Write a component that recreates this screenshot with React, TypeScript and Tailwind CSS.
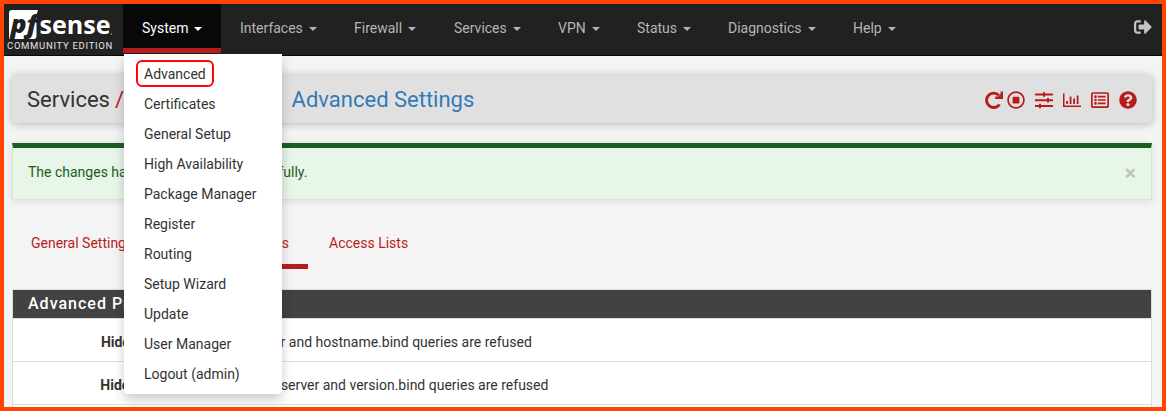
import { FaSignOutAlt, FaRegStopCircle, FaRegListAlt, FaQuestionCircle } from "react-icons/fa";

const menus = [
  { label: "Interfaces", width: "w-[114px]" },
  { label: "Firewall", width: "w-[100px]" },
  { label: "Services", width: "w-[104px]" },
  { label: "VPN", width: "w-[79px]" },
  { label: "Status", width: "w-[91px]" },
  { label: "Diagnostics", width: "w-[125px]" },
  { label: "Help", width: "w-[81px]" },
];

const systemItems = [
  "Advanced", "Certificates", "General Setup", "High Availability", "Package Manager",
  "Register", "Routing", "Setup Wizard", "Update", "User Manager", "Logout (admin)",
];

function Caret() {
  return <span className="ml-[6px] mt-px h-0 w-0 border-x-4 border-t-4 border-x-transparent border-t-current" />;
}

function Logo() {
  return (
    <div className="w-[119px] pl-[3px] pt-[6px] text-white">
      <svg width="110" height="30" viewBox="0 0 110 30" className="block overflow-visible">
        <path d="M5 0H31Q29.500 3 29.500 7V26Q29.500 29 26.500 29H2V3Q2 0 5 0Z" fill="#fff" />
        <text x="3.500" y="23" fontFamily="Open Sans" fontWeight="800" fontStyle="italic" fontSize="25" textLength="27" lengthAdjust="spacingAndGlyphs" fill="#212121">pf</text>
        <text x="32.500" y="24" fontFamily="Open Sans" fontWeight="700" fontSize="25" textLength="71" lengthAdjust="spacingAndGlyphs" fill="#fff">sense</text>
        <circle cx="104.500" cy="24" r="0.8" fill="#aaa" />
      </svg>
      <div className="whitespace-nowrap text-[9.5px] leading-[12px] tracking-[0.7px] text-[#e6e6e6]">COMMUNITY EDITION</div>
    </div>
  );
}

function RestartIcon() {
  return (
    <svg viewBox="0 0 18 18" width="18" height="18" className="-mr-[6px]">
      <path d="M13.800 4.200A7.200 7.200 0 1 0 14.600 13.500" fill="none" stroke="currentColor" strokeWidth="2.900" />
      <path d="M18 0.500V8H10.200V5.600H13L15.600 3V0.500Z" fill="currentColor" />
    </svg>
  );
}

function SlidersIcon() {
  return (
    <svg viewBox="0 0 18 18" width="18" height="18" fill="currentColor">
      <path d="M0 2.500h18v2H0zM0 8.200h18v2H0zM0 14h18v2H0z" />
      <path d="M8 1.200h2v4.600H8zM12 6.900h2v4.600h-2zM4 12.700h2v4.600H4z" />
    </svg>
  );
}

function ChartIcon() {
  return (
    <svg viewBox="0 0 18 18" width="18" height="18" fill="currentColor">
      <path d="M0 2.500h1.500v12H18V16H0zM3.200 10h1.800v3H3.200zM6.700 5.500h1.800V13H6.700zM10.200 7.500H12V13h-1.800zM13.700 4.500h1.800V13h-1.800z" />
    </svg>
  );
}

function OptionRow({ label, text }: { label: string; text: string }) {
  return (
    <div className="flex h-[43px] items-center border-b border-[#ddd] pt-1">
      <div className="w-[168px] shrink-0 text-right font-bold">{label}</div>
      <div className="ml-[34px] flex items-center whitespace-nowrap">
        <span className="mr-1 h-[13px] w-[13px] shrink-0 rounded-sm border border-[#767676] bg-white" />
        {text}
      </div>
    </div>
  );
}

export default function App() {
  return (
    <div className="relative h-[411px] w-[1166px] overflow-hidden border-4 border-[#ff4500] bg-[#f4f4f4] text-[14px] leading-[20px] text-[#333] [font-family:Roboto,sans-serif]">
      <header className="flex h-[52px] border-b border-[#080808] bg-[#212121] text-[#b5b5b5]">
        <Logo />
        <div className="relative w-[98px]">
          <div className="flex h-[49px] items-center border-b-[5px] border-[#b71c1c] bg-[#080808] pl-[19px] pt-1 text-white">
            System<Caret />
          </div>
          <ul className="absolute left-px top-[50px] z-10 w-[158px] rounded-b bg-white py-[5px] text-[#333] shadow-[0_6px_12px_rgba(0,0,0,0.2)]">
            {systemItems.map((item, i) => (
              <li key={item} className="relative flex h-[30px] items-center pl-5">
                {i === 0 && <span className="absolute left-3 top-[1px] h-[27px] w-[78px] rounded-[6px] border-2 border-[#ff0505]" />}
                {item}
              </li>
            ))}
          </ul>
        </div>
        {menus.map((menu) => (
          <div key={menu.label} className={`flex h-[48px] items-center pl-[19px] ${menu.width}`}>
            {menu.label}<Caret />
          </div>
        ))}
        <FaSignOutAlt className="ml-auto mr-[10px] mt-[14px] text-[18px] text-[#c4c4c4]" />
      </header>

      <main className="pl-2 pr-[10px] pt-[19px]">
        <div className="flex h-12 items-center justify-between rounded-[3px] bg-[#e0e0e0] px-[15px] pt-[2px] shadow-[0_1px_8px_rgba(0,0,0,0.25)]">
          <h1 className="flex gap-[5px] text-[22px] leading-6">
            <span>Services</span><span className="text-[#b71c1c]">/</span>
            <span className="w-[134px] text-[#337ab7]">DNS Resolver</span>
            <span className="text-[#b71c1c]">/</span>
            <span className="pl-[9.5px] text-[#337ab7]">Advanced Settings</span>
          </h1>
          <div className="flex items-center gap-[10px] text-[18px] text-[#b71c1c]">
            <RestartIcon /><FaRegStopCircle /><SlidersIcon /><ChartIcon /><FaRegListAlt /><FaQuestionCircle />
          </div>
        </div>

        <div className="mt-5 flex h-[57px] items-center justify-between border border-t-[5px] border-[#d6e9c6] border-t-[#1b5e20] bg-[#e8f5e9] pb-1 pl-[15px] pr-[15px] text-[#1b5e20] shadow-[0_1px_8px_rgba(0,0,0,0.1)]">
          <span>The changes have been applied successfully.</span>
          <span className="pt-[2px] text-[21px] font-bold text-[#b9c4ba]">×</span>
        </div>

        <nav className="mt-[23px] flex h-[46px] text-[#b71c1c]">
          <span className="w-[128px] pl-[19px] pt-[10px]">General Settings</span>
          <span className="w-[168px] whitespace-nowrap border-b-[5px] border-[#b71c1c] pr-[19px] pt-[10px] text-right">Advanced Settings</span>
          <span className="pl-[21px] pt-[10px]">Access Lists</span>
        </nav>

        <section className="mt-5 h-[140px] border border-[#ddd] bg-white">
          <h2 className="h-[29px] border-b border-[#ddd] bg-[#424242] pl-[15px] text-[16px] font-medium leading-[27px] tracking-[1px] text-white">Advanced Privacy Options</h2>
          <OptionRow label="Hide Identity" text="id.server and hostname.bind queries are refused" />
          <OptionRow label="Hide Version" text="version.server and version.bind queries are refused" />
        </section>
      </main>
    </div>
  );
}
